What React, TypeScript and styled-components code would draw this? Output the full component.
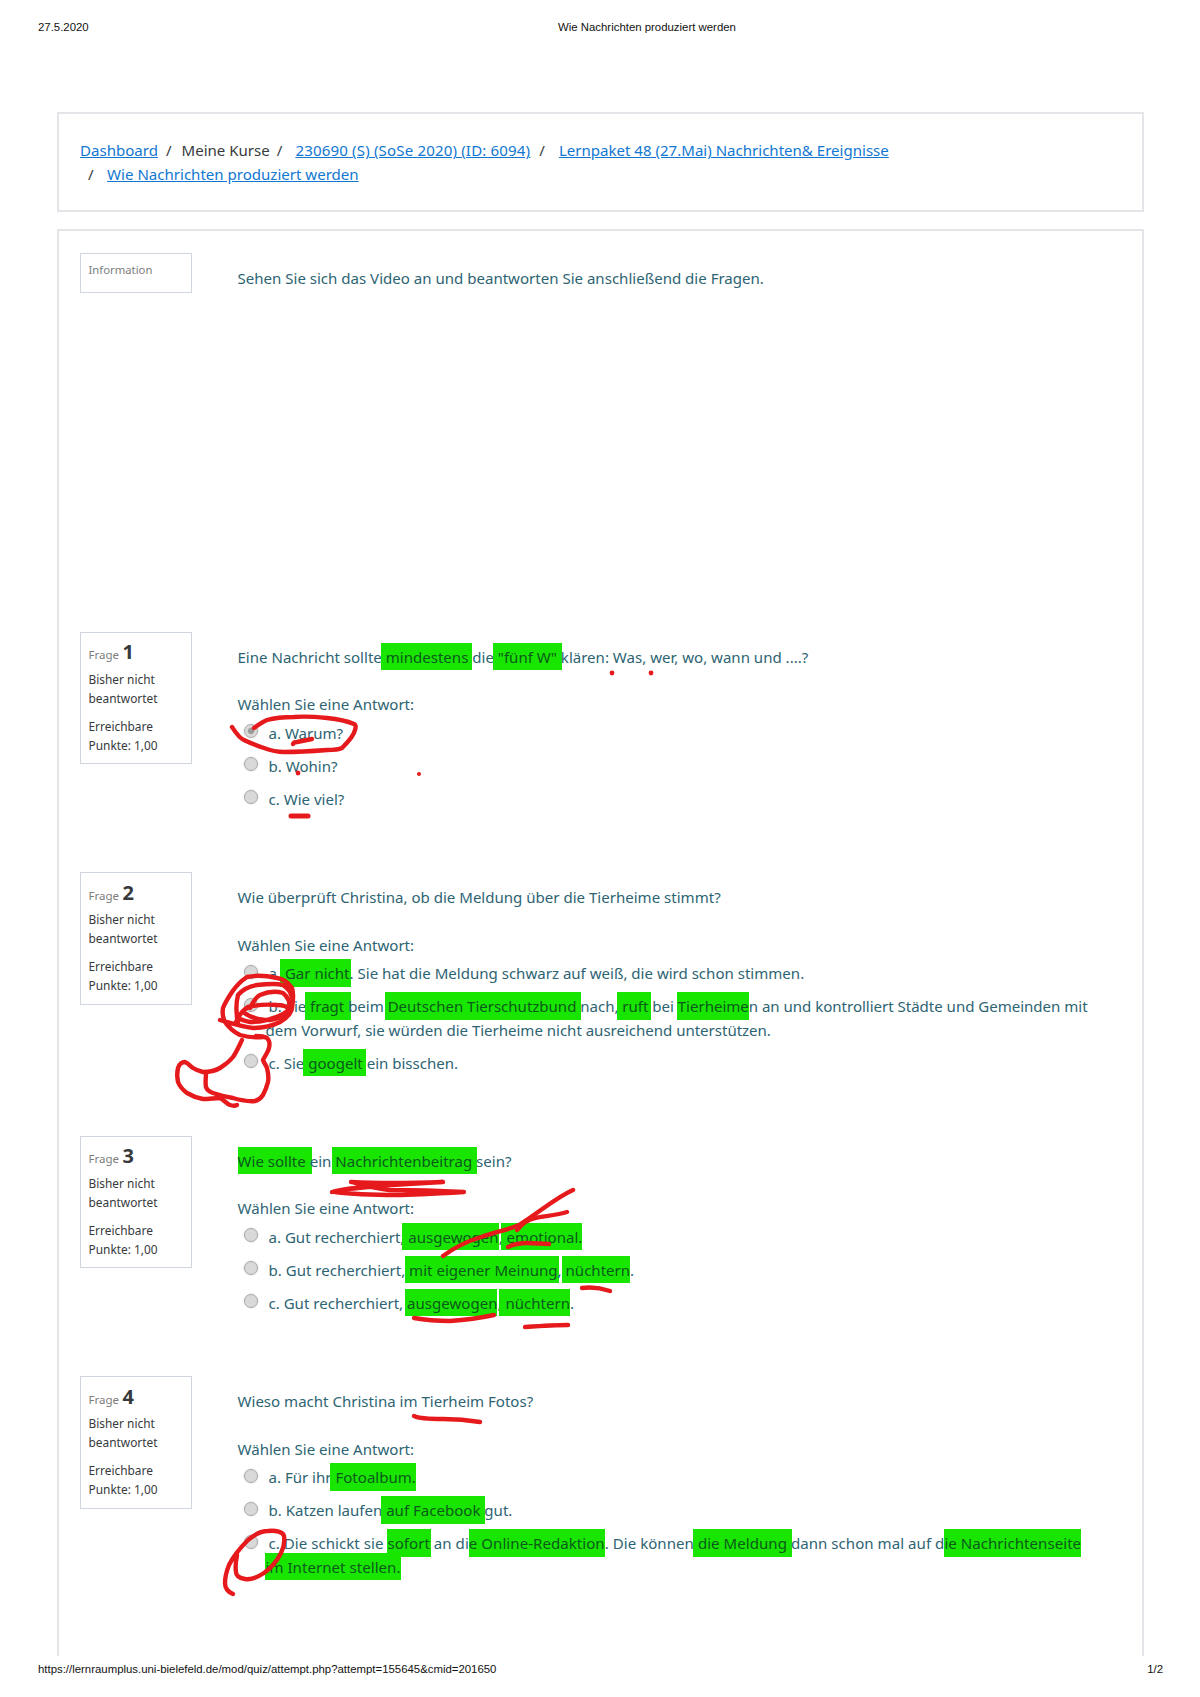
import React from 'react'
import styled, { createGlobalStyle } from 'styled-components'

const GlobalStyle = createGlobalStyle`
	html, body {
		margin: 0;
		background: #fff;
	}
`

const Page = styled.div`
	position: relative;
	display: flex;
	flex-direction: column;
	width: 1200px;
	height: 1697px;
	overflow: hidden;
	font-family: 'Noto Sans', sans-serif;
`

const PrintHeader = styled.header`
	display: grid;
	grid-template-columns: 520px auto;
	height: 112px;
	box-sizing: border-box;
	padding: 20px 38px 0;
	font: 11.4px/14px 'Liberation Sans', Arial, sans-serif;
	color: #111;
`

const PrintFooter = styled.footer`
	display: flex;
	justify-content: space-between;
	box-sizing: border-box;
	height: 41px;
	padding: 5.5px 37px 0 38px;
	font: 11.4px/14px 'Liberation Sans', Arial, sans-serif;
	color: #111;
`

const Main = styled.main`
	display: flex;
	flex: 1;
	flex-direction: column;
	gap: 17px;
	margin: 0 56px 0 57px;
`

const Card = styled.section`
	box-sizing: border-box;
	border: 2px solid #e3e5e8;
	padding-left: 21px;
`

const BreadcrumbCard = styled(Card)`
	height: 100px;
	padding-top: 25px;
	font-size: 15.05px;
	line-height: 23.5px;
	color: #373a3c;
`

const Crumb = styled.a<{ $spacing?: number }>`
	color: #1177d1;
	text-decoration: underline;
	letter-spacing: ${p => p.$spacing ?? 0}px;
`

const Sep = styled.span<{ $before?: number; $after?: number }>`
	margin: 0 ${p => p.$after ?? 14}px 0 ${p => p.$before ?? 8}px;
`

const QuizCard = styled(Card)`
	flex: 1;
	border-bottom: 0;
	padding-top: 22px;
`

const Item = styled.div`
	display: grid;
	grid-template-columns: 112px 1fr;
	column-gap: 45.5px;
	margin-bottom: 60.75px;
`

const InfoBox = styled.div`
	box-sizing: border-box;
	align-self: start;
	border: 1.5px solid #cfd6de;
	padding: 7.5px 7.5px 8.5px;
	font-size: 11.9px;
	line-height: 19px;
	color: #373a3c;
`

const InfoLabel = styled.div`
	height: 22px;
	color: #7d7d7d;
	font-size: 11.3px;
	line-height: 16px;
`

const FrageRow = styled.div`
	height: 24px;
	margin-bottom: 5.5px;
	color: #7d7d7d;
	font-size: 11.5px;
	line-height: 23px;
`

const FrageNo = styled.b`
	margin-left: 3.5px;
	font-size: 20px;
	font-weight: 700;
	color: #373a3c;
`

const Status = styled.div`
	margin-bottom: 9px;
`

const Content = styled.div`
	padding-top: 14px;
	font-size: 15.05px;
	line-height: 23.5px;
	color: #2d6473;
`

const Prompt = styled.div`
	margin-top: 24px;
`

const Options = styled.div`
	display: flex;
	flex-direction: column;
	gap: 9.5px;
	padding: 5px 0 0 28px;
`

const Option = styled.div<{ $spacing?: number }>`
	white-space: nowrap;
	letter-spacing: ${p => p.$spacing ?? 0}px;
`

const Radio = styled.input.attrs({ type: 'radio' })`
	appearance: none;
	box-sizing: border-box;
	display: inline-block;
	vertical-align: 0.5px;
	width: 14px;
	height: 14px;
	margin: 0 11px 0 -22px;
	border: 1.5px solid #a8a8a8;
	border-radius: 50%;
	background: #d9d9d9;
	box-shadow: 0 0 0 1px #f3f3f3;

	&:checked {
		background: radial-gradient(circle, #9a9a9a 0 30%, #dadada 45%);
	}
`

const Video = styled.div`
	height: 280.5px;
`

const Mark = styled.span<{ $l?: number; $r?: number }>`
	padding: 4px ${p => p.$r ?? 0}px 3.5px ${p => p.$l ?? 0}px;
	margin: 0 ${p => -(p.$r ?? 0)}px 0 ${p => -(p.$l ?? 0)}px;
	background: #19e600;
	color: #0a5a1c;
`

const Ink = styled.svg`
	position: absolute;
	inset: 0;
	pointer-events: none;
	fill: none;
	stroke: #e61a1c;
	stroke-width: 4.4;
	stroke-linecap: round;
	stroke-linejoin: round;
`

const InkDot = styled.circle`
	fill: #e61a1c;
	stroke: none;
`

const QuestionInfo: React.FC<{ no: number }> = ({ no }) => (
	<InfoBox>
		<FrageRow>
			Frage<FrageNo>{no}</FrageNo>
		</FrageRow>
		<Status>
			Bisher nicht
			<br />
			beantwortet
		</Status>
		<div>
			Erreichbare
			<br />
			Punkte: 1,00
		</div>
	</InfoBox>
)

const Annotations = () => (
	<Ink viewBox="0 0 1200 1697" width="1200" height="1697">
		{/* Frage 1 */}
		<InkDot cx="612" cy="673" r="2.4" />
		<InkDot cx="651" cy="673" r="2.4" />
		<InkDot cx="298" cy="773" r="2.4" />
		<InkDot cx="419" cy="774" r="2" />
		<path transform="translate(2 0)" d="M230 727C234 733 237 738 242 740C250 744 256 746 262 748C270 751 276 752 282 752C295 752 312 751 325 750C332 750 336 750 340 748C346 742 352 735 353 730C354 727 354 725 352 724C345 721 335 719 325 718C315 717 303 716 292 717C282 717 272 718 265 720C260 722 256 725 252 728" />
		<path d="M293 744C294 742 296 742 297 742C302 741 307 740 312 739" />
		<path d="M291 816H308" strokeWidth="5" />
		{/* Frage 2 */}
		<path d="M220 1020C230 1023 243 1027 253 1028C263 1028 272 1026 280 1022C287 1018 291 1014 292 1008C293 1002 294 994 292 988C288 982 284 979 277 978C268 976 256 975 247 977C241 981 236 986 232 992C228 998 225 1003 223 1008C222 1014 223 1018 225 1022C229 1028 234 1032 240 1035C247 1037 255 1038 263 1037" />
		<path d="M238 1022C236 1013 236 1003 238 995C243 989 250 986 257 985C266 984 276 983 283 985C288 988 291 992 292 998" />
		<path d="M250 1008C253 1002 256 997 260 995C267 992 276 991 283 993C288 997 290 1002 290 1008C286 1013 280 1016 273 1018C266 1021 257 1022 250 1022C245 1021 240 1020 237 1017" />
		<path d="M236 1022C239 1015 243 1010 248 1007C257 1005 267 1004 277 1005C282 1005 287 1006 291 1010" />
		<path d="M243 1012C247 1015 251 1017 255 1018C260 1020 265 1020 270 1020C277 1019 284 1016 288 1012" />
		<path d="M242 1040C239 1046 237 1051 233 1057C229 1062 225 1065 220 1068C215 1071 209 1072 203 1072C199 1071 196 1070 193 1068C190 1066 188 1063 185 1062C181 1062 179 1065 178 1068C177 1072 177 1077 178 1082C180 1087 183 1090 187 1093C192 1096 197 1098 203 1099C209 1099 215 1098 220 1098C224 1100 227 1104 230 1105C233 1106 235 1106 237 1105" />
		<path d="M206 1073C206 1078 205 1083 206 1087C207 1090 210 1092 213 1093C219 1095 226 1097 233 1098C240 1100 248 1102 255 1101C259 1100 261 1098 263 1095C265 1091 267 1086 268 1082C269 1077 268 1072 267 1068C266 1065 264 1063 263 1060C265 1056 268 1052 269 1048C270 1044 269 1040 267 1038C263 1036 259 1036 256 1036" />
		{/* Frage 3 */}
		<path d="M332 1192C345 1188 400 1184 443 1182C415 1183 370 1183 351 1182C365 1186 378 1189 389 1190C415 1190 445 1191 464 1192C430 1194 410 1195 397 1195C375 1195 350 1194 335 1192" />
		<path d="M443 1256C455 1247 468 1241 481 1237C495 1232 508 1230 519 1225C540 1212 555 1198 573 1190" />
		<path d="M517 1230C522 1224 528 1219 535 1218C545 1216 558 1215 567 1212" />
		<path d="M508 1247C514 1244 520 1243 527 1243C535 1243 542 1244 549 1244" />
		<path d="M582 1288C590 1287 598 1287 610 1291" />
		<path d="M414 1318C425 1320 435 1321 450 1321C465 1320 480 1318 494 1315" />
		<path d="M525 1327C540 1326 555 1325 568 1325" />
		{/* Frage 4 */}
		<path d="M414 1416C420 1419 432 1419 443 1419C455 1419 468 1420 480 1422" />
		<path transform="translate(1 0)" d="M232 1594C227 1592 224 1588 224 1583C224 1576 226 1570 228 1565C233 1555 240 1547 247 1540C254 1534 260 1531 267 1531C275 1530 282 1532 283 1536C284 1542 283 1547 280 1553C276 1561 270 1568 263 1573C257 1577 250 1580 244 1579C238 1578 235 1576 235 1572C234 1566 235 1560 236 1555" />
	</Ink>
)

export default function App() {
	return (
		<Page>
			<GlobalStyle />
			<PrintHeader>
				<span>27.5.2020</span>
				<span>Wie Nachrichten produziert werden</span>
			</PrintHeader>
			<Main>
				<BreadcrumbCard>
					<Crumb>Dashboard</Crumb>
					<Sep $after={10}>/</Sep>
					Meine Kurse
					<Sep $before={7} $after={13}>/</Sep>
					<Crumb $spacing={0.16}>230690 (S) (SoSe 2020) (ID: 6094)</Crumb>
					<Sep $before={9}>/</Sep>
					<Crumb>Lernpaket 48 (27.Mai) Nachrichten&amp; Ereignisse</Crumb>
					<br />
					<Sep $before={8} $after={13.5}>/</Sep>
					<Crumb>Wie Nachrichten produziert werden</Crumb>
				</BreadcrumbCard>
				<QuizCard>
					<Item>
						<InfoBox>
							<InfoLabel>Information</InfoLabel>
						</InfoBox>
						<Content>
							Sehen Sie sich das Video an und beantworten Sie anschließend die Fragen.
							<Video />
						</Content>
					</Item>
					<Item>
						<QuestionInfo no={1} />
						<Content>
							Eine Nachricht sollte <Mark $l={5} $r={4}>mindestens</Mark> die <Mark $l={5} $r={5}>"fünf W"</Mark> klären: Was, wer, wo, wann und ....?
							<Prompt>Wählen Sie eine Antwort:</Prompt>
							<Options>
								<Option><Radio name="q1" defaultChecked />a. Warum?</Option>
								<Option><Radio name="q1" />b. Wohin?</Option>
								<Option><Radio name="q1" />c. Wie viel?</Option>
							</Options>
						</Content>
					</Item>
					<Item>
						<QuestionInfo no={2} />
						<Content>
							Wie überprüft Christina, ob die Meldung über die Tierheime stimmt?
							<Prompt>Wählen Sie eine Antwort:</Prompt>
							<Options>
								<Option><Radio name="q2" />a. <Mark $l={5} $r={1}>Gar nicht</Mark>. Sie hat die Meldung schwarz auf weiß, die wird schon stimmen.</Option>
								<Option $spacing={-0.02}>
									<Radio name="q2" />b. Sie <Mark $l={5} $r={7}>fragt</Mark> beim <Mark $l={3} $r={5}>Deutschen Tierschutzbund</Mark> nach, <Mark $l={5} $r={3}>ruft</Mark> bei <Mark $l={1}>Tierheime</Mark>n an und kontrolliert Städte und Gemeinden mit
									<br />
									dem Vorwurf, sie würden die Tierheime nicht ausreichend unterstützen.
								</Option>
								<Option><Radio name="q2" />c. Sie <Mark $l={5} $r={3}>googelt</Mark> ein bisschen.</Option>
							</Options>
						</Content>
					</Item>
					<Item>
						<QuestionInfo no={3} />
						<Content>
							<Mark $r={6}>Wie sollte</Mark> ein <Mark $l={3} $r={5}>Nachrichtenbeitrag</Mark> sein?
							<Prompt>Wählen Sie eine Antwort:</Prompt>
							<Options>
								<Option><Radio name="q3" />a. Gut recherchiert, <Mark $l={6}>ausgewogen</Mark>, <Mark $l={6}>emotional.</Mark></Option>
								<Option><Radio name="q3" />b. Gut recherchiert, <Mark $l={4} $r={1}>mit eigener Meinung</Mark>, <Mark $l={4}>nüchtern</Mark>.</Option>
								<Option><Radio name="q3" />c. Gut recherchiert, <Mark $l={2}>ausgewogen</Mark>, <Mark $l={6}>nüchtern</Mark>.</Option>
							</Options>
						</Content>
					</Item>
					<Item>
						<QuestionInfo no={4} />
						<Content>
							Wieso macht Christina im Tierheim Fotos?
							<Prompt>Wählen Sie eine Antwort:</Prompt>
							<Options>
								<Option><Radio name="q4" />a. Für ihr <Mark $l={5}>Fotoalbum.</Mark></Option>
								<Option><Radio name="q4" />b. Katzen laufen <Mark $l={5} $r={5}>auf Facebook</Mark> gut.</Option>
								<Option $spacing={0.04}>
									<Radio name="q4" />c. Die schickt sie <Mark $r={1}>sofort</Mark> an di<Mark>e Online-Redaktion</Mark>. Die können <Mark $l={5} $r={5}>die Meldung</Mark> dann schon mal auf d<Mark>ie Nachrichtenseite</Mark>
									<br />
									<Mark $l={1}>im Internet stellen.</Mark>
								</Option>
							</Options>
						</Content>
					</Item>
				</QuizCard>
			</Main>
			<PrintFooter>
				<span>https://lernraumplus.uni-bielefeld.de/mod/quiz/attempt.php?attempt=155645&amp;cmid=201650</span>
				<span>1/2</span>
			</PrintFooter>
			<Annotations />
		</Page>
	)
}
